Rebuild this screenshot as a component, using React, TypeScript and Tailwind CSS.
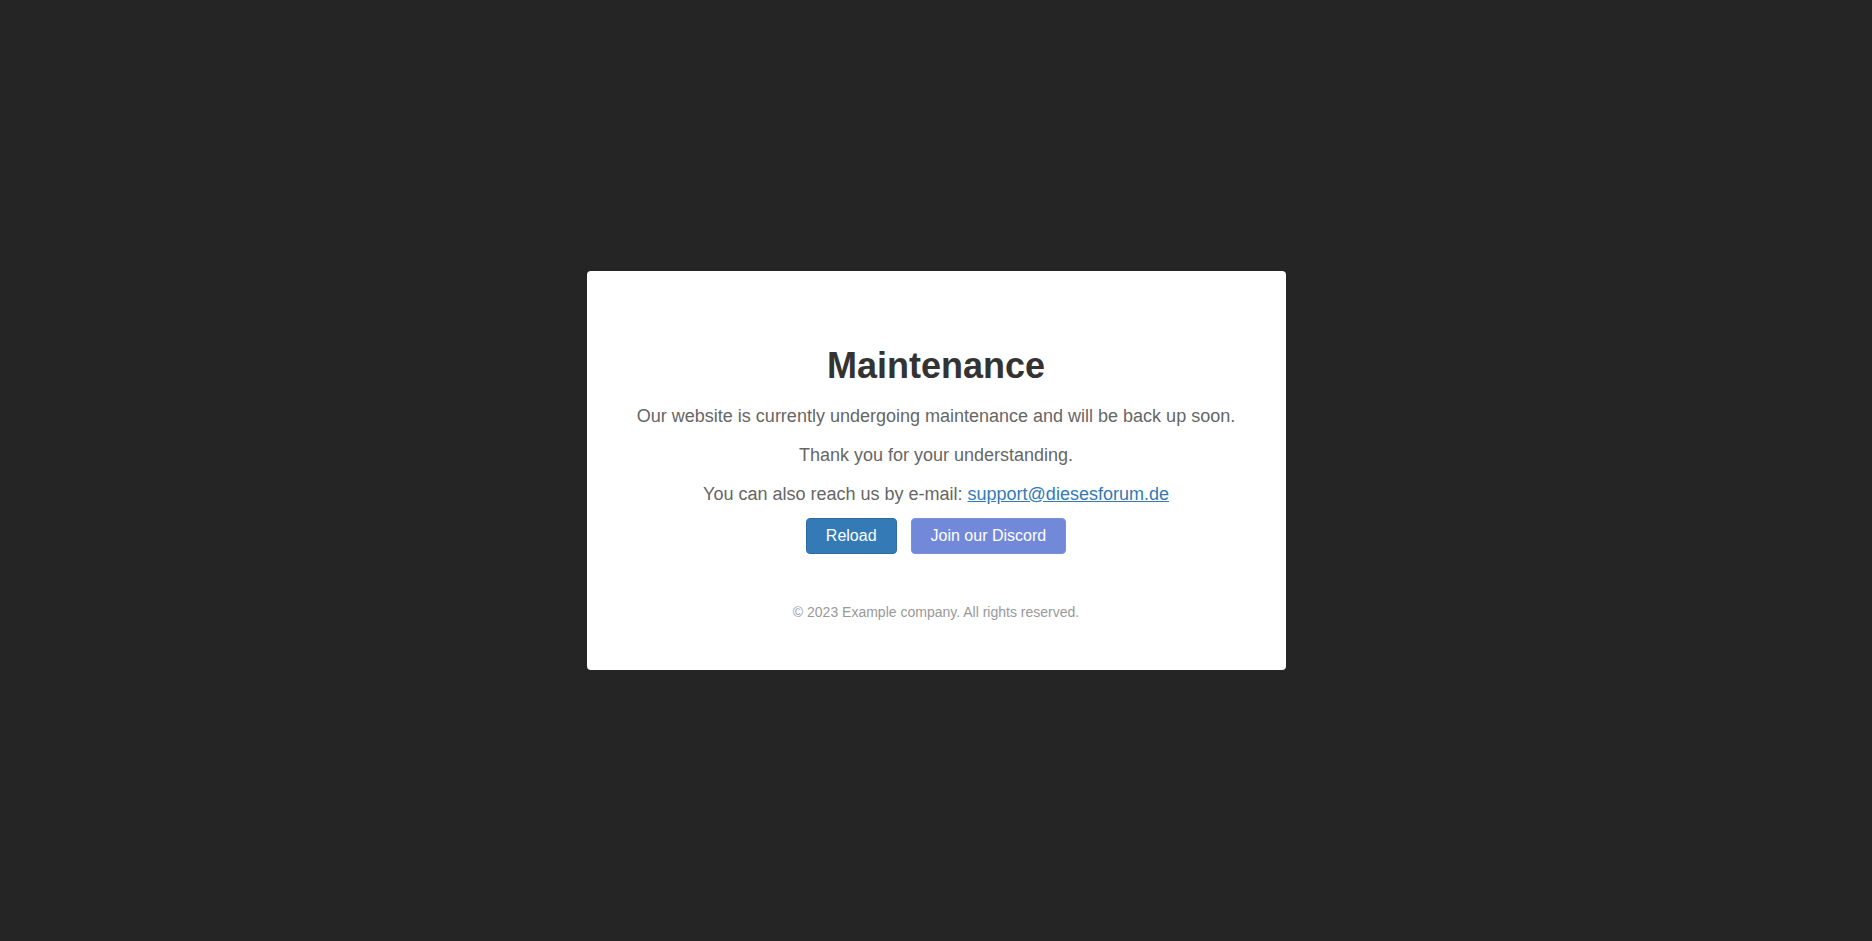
export default function App() {
  return (
    <div className="flex min-h-screen items-center justify-center bg-[#252525] font-['Liberation_Sans',Arial,sans-serif]">
      <div className="w-[699px] rounded bg-white pt-[74px] pb-[50px] text-center">
        <h1 className="text-[36px] font-bold leading-[normal] text-[#333]">Maintenance</h1>

        <div className="mt-[19px] flex flex-col gap-[18px] text-[18px] leading-[normal] text-[#666]">
          <p>Our website is currently undergoing maintenance and will be back up soon.</p>
          <p>Thank you for your understanding.</p>
          <p>
            You can also reach us by e-mail:{" "}
            <a href="#" className="text-[#337ab7] underline">
              support@diesesforum.de
            </a>
          </p>
        </div>

        <div className="mt-[13px] flex justify-center gap-[14px]">
          <button
            onClick={() => window.location.reload()}
            className="rounded border border-[#2e6da4] bg-[#337ab7] px-[19px] py-[6px] text-[16px] leading-[1.42857] text-white"
          >
            Reload
          </button>
          <button className="rounded border border-[#7a8fdc] bg-[#7289da] px-[19px] py-[6px] text-[16px] leading-[1.42857] text-white">
            Join our Discord
          </button>
        </div>

        {/* footer */}
        <p className="mt-[50px] text-[14px] leading-[normal] text-[#999]">
          © 2023 Example company. All rights reserved.
        </p>
      </div>
    </div>
  );
}
